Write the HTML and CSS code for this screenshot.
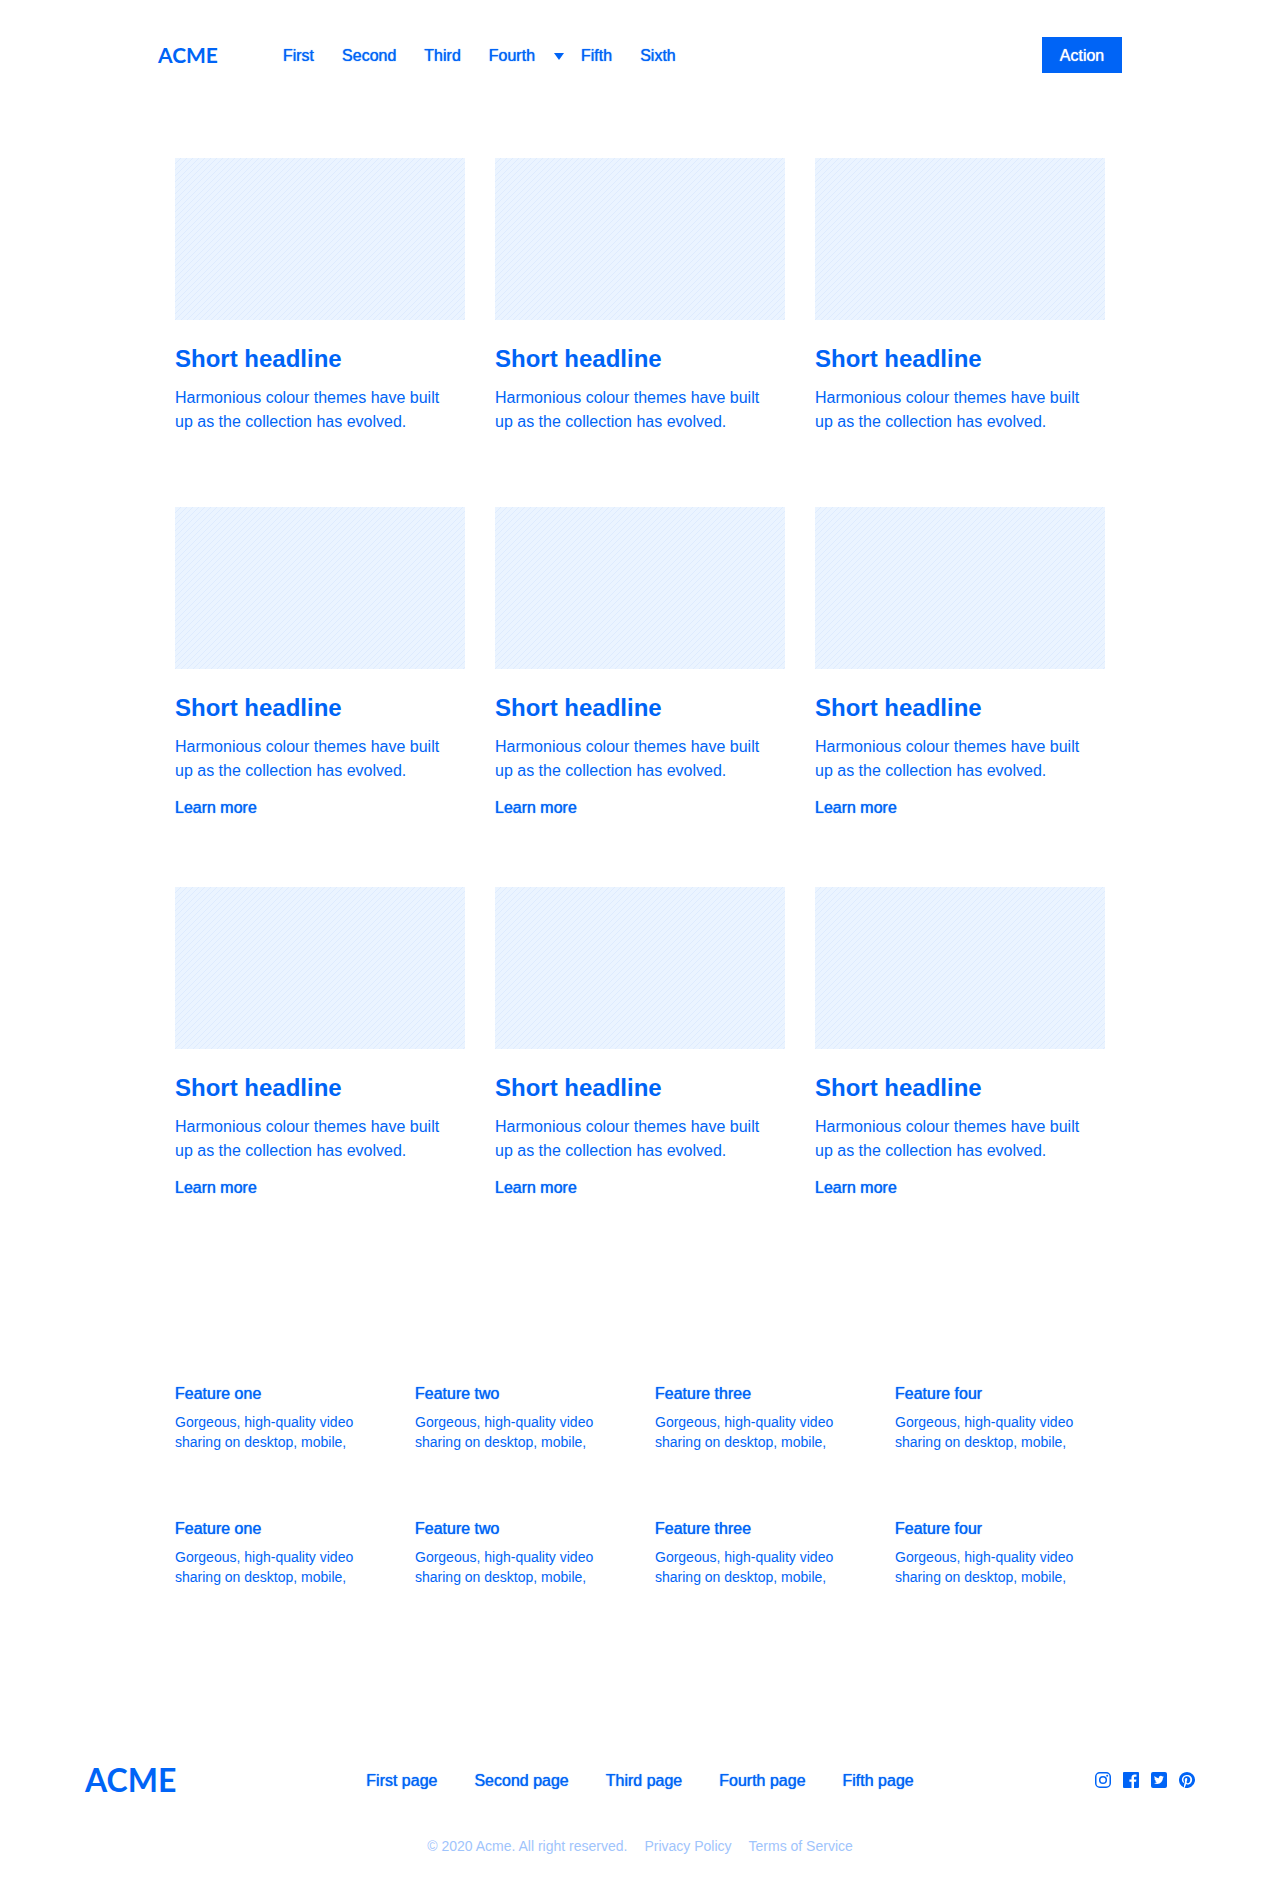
FILE: index.html
```html
<!DOCTYPE html>
<html lang="en">
<head>
<meta charset="utf-8">
<meta name="viewport" content="width=device-width, initial-scale=1">
<title>Acme</title>
<link rel="stylesheet" href="styles.css">
</head>
<body>
<header class="header">
  <a class="logo" href="#">ACME</a>
  <nav class="header-nav" aria-label="Main">
    <a href="#">First</a>
    <a href="#">Second</a>
    <a href="#">Third</a>
    <a class="has-menu" href="#">Fourth <svg class="caret" viewBox="0 0 10 7" aria-hidden="true"><path d="M0 0h10L5 7z"/></svg></a>
    <a href="#">Fifth</a>
    <a href="#">Sixth</a>
  </nav>
  <button class="action" type="button">Action</button>
</header>

<main class="main">
  <section class="cards cards-plain">
    <article class="card"><div class="thumb"></div><h2>Short headline</h2><p>Harmonious colour themes have built up as the collection has evolved.</p></article>
    <article class="card"><div class="thumb"></div><h2>Short headline</h2><p>Harmonious colour themes have built up as the collection has evolved.</p></article>
    <article class="card"><div class="thumb"></div><h2>Short headline</h2><p>Harmonious colour themes have built up as the collection has evolved.</p></article>
  </section>
  <section class="cards">
    <article class="card"><div class="thumb"></div><h2>Short headline</h2><p>Harmonious colour themes have built up as the collection has evolved.</p><a class="more" href="#">Learn more</a></article>
    <article class="card"><div class="thumb"></div><h2>Short headline</h2><p>Harmonious colour themes have built up as the collection has evolved.</p><a class="more" href="#">Learn more</a></article>
    <article class="card"><div class="thumb"></div><h2>Short headline</h2><p>Harmonious colour themes have built up as the collection has evolved.</p><a class="more" href="#">Learn more</a></article>
  </section>
  <section class="cards">
    <article class="card"><div class="thumb"></div><h2>Short headline</h2><p>Harmonious colour themes have built up as the collection has evolved.</p><a class="more" href="#">Learn more</a></article>
    <article class="card"><div class="thumb"></div><h2>Short headline</h2><p>Harmonious colour themes have built up as the collection has evolved.</p><a class="more" href="#">Learn more</a></article>
    <article class="card"><div class="thumb"></div><h2>Short headline</h2><p>Harmonious colour themes have built up as the collection has evolved.</p><a class="more" href="#">Learn more</a></article>
  </section>
  <section class="features">
    <article class="feature"><h3>Feature one</h3><p>Gorgeous, high-quality video sharing on desktop, mobile,</p></article>
    <article class="feature"><h3>Feature two</h3><p>Gorgeous, high-quality video sharing on desktop, mobile,</p></article>
    <article class="feature"><h3>Feature three</h3><p>Gorgeous, high-quality video sharing on desktop, mobile,</p></article>
    <article class="feature"><h3>Feature four</h3><p>Gorgeous, high-quality video sharing on desktop, mobile,</p></article>
    <article class="feature"><h3>Feature one</h3><p>Gorgeous, high-quality video sharing on desktop, mobile,</p></article>
    <article class="feature"><h3>Feature two</h3><p>Gorgeous, high-quality video sharing on desktop, mobile,</p></article>
    <article class="feature"><h3>Feature three</h3><p>Gorgeous, high-quality video sharing on desktop, mobile,</p></article>
    <article class="feature"><h3>Feature four</h3><p>Gorgeous, high-quality video sharing on desktop, mobile,</p></article>
  </section>
</main>

<footer class="footer">
  <div class="footer-top">
    <a class="logo logo-large" href="#">ACME</a>
    <nav class="footer-nav" aria-label="Footer">
      <a href="#">First page</a>
      <a href="#">Second page</a>
      <a href="#">Third page</a>
      <a href="#">Fourth page</a>
      <a href="#">Fifth page</a>
    </nav>
    <div class="social">
      <a href="#" aria-label="Instagram"><svg viewBox="0 0 16 16"><rect x=".75" y=".75" width="14.5" height="14.5" rx="4" fill="none" stroke="currentColor" stroke-width="1.5"/><circle cx="8" cy="8" r="3.3" fill="none" stroke="currentColor" stroke-width="1.5"/><circle cx="12.2" cy="3.8" r="1"/></svg></a>
      <a href="#" aria-label="Facebook"><svg viewBox="0 0 16 16"><path d="M.9 0A.9.9 0 0 0 0 .9v14.2c0 .5.4.9.9.9h7.6V9.8H6.4V7.4h2.1V5.6c0-2.1 1.3-3.2 3.1-3.2.9 0 1.700.1 1.900.1v2.200h-1.300c-1 0-1.200.5-1.200 1.200v1.500h2.400l-.3 2.400H11V16h4.100c.5 0 .9-.4.9-.9V.9a.9.9 0 0 0-.9-.9z"/></svg></a>
      <a href="#" aria-label="Twitter"><svg viewBox="0 0 16 16"><path fill-rule="evenodd" d="M2 0h12a2 2 0 0 1 2 2v12a2 2 0 0 1-2 2H2a2 2 0 0 1-2-2V2a2 2 0 0 1 2-2zm11 4.700c-.4.200-.8.300-1.200.300.400-.3.800-.7.900-1.100-.4.200-.9.400-1.300.500a2.050 2.050 0 0 0-3.500 1.900c-1.700-.1-3.200-.9-4.200-2.200-.6 1-.2 2.200.6 2.800-.3 0-.7-.1-.9-.3 0 1 .7 1.900 1.600 2.100-.3.100-.6.100-.9 0 .3.800 1 1.400 1.900 1.400A4.100 4.100 0 0 1 3 11c.9.600 2 .9 3.100.9 3.800 0 5.900-3.200 5.800-6.100.4-.3.800-.7 1.100-1.100z"/></svg></a>
      <a href="#" aria-label="Pinterest"><svg viewBox="0 0 16 16"><path d="M8 0a8 8 0 0 0-2.915 15.452c-.07-.633-.134-1.606.027-2.297.146-.625.938-3.977.938-3.977s-.239-.479-.239-1.187c0-1.113.645-1.943 1.448-1.943.682 0 1.012.512 1.012 1.127 0 .686-.437 1.712-.663 2.663-.188.796.4 1.446 1.185 1.446 1.422 0 2.515-1.500 2.515-3.664 0-1.915-1.377-3.254-3.342-3.254-2.276 0-3.612 1.707-3.612 3.471 0 .688.265 1.425.595 1.826a.24.24 0 0 1 .056.230c-.061.252-.196.796-.222.907-.035.146-.116.177-.268.107-1-.465-1.624-1.926-1.624-3.100 0-2.523 1.834-4.840 5.286-4.840 2.775 0 4.932 1.977 4.932 4.620 0 2.757-1.739 4.976-4.151 4.976-.811 0-1.573-.421-1.834-.919l-.498 1.902c-.181.695-.669 1.566-.995 2.097A8 8 0 1 0 8 0z"/></svg></a>
    </div>
  </div>
  <div class="legal">
    <span>© 2020 Acme. All right reserved.</span>
    <a href="#">Privacy Policy</a>
    <a href="#">Terms of Service</a>
  </div>
</footer>
</body>
</html>
```
FILE: styles.css
```css
:root {
  --blue: #0064f6;
  --pale: #9fc4fc;
}

* { box-sizing: border-box; }

body {
  margin: 0;
  background: #fff;
  color: var(--blue);
  font: 16px/24px "Liberation Sans", Arial, sans-serif;
}

h2, h3, p { margin: 0; }

a { color: inherit; text-decoration: none; }

svg { display: block; fill: currentColor; }

.header {
  display: flex;
  align-items: center;
  max-width: 1012px;
  margin: 0 auto;
  padding: 37px 24px 0;
}

.logo {
  font: 700 21px/36px Lato, sans-serif;
}

.logo-large {
  font-size: 32px;
}

.header-nav {
  display: flex;
  gap: 28px;
  margin-left: 65px;
  padding-top: 2px;
}

/* Medium weight: regular letterforms, slightly thickened */
.header-nav, .footer-nav, .more, .feature h3, .action {
  text-shadow: 0 0 1px currentColor;
}

.has-menu {
  display: flex;
  align-items: center;
  gap: 19px;
  margin-right: -11px;
}

.caret { width: 10px; height: 7px; }

.action {
  min-width: 80px;
  height: 36px;
  margin-left: auto;
  padding: 2px 16px 0;
  border: 0;
  background: var(--blue);
  color: #fff;
  font: inherit;
}

.main {
  max-width: 978px;
  margin: 0 auto;
  padding: 85px 24px 0;
}

.cards {
  display: grid;
  grid-template-columns: repeat(3, 1fr);
  gap: 30px;
  margin-bottom: 67px;
}

.cards-plain { margin-bottom: 73px; }

.thumb {
  height: 162px;
  margin-bottom: 23px;
  background: linear-gradient(135deg, #ebf4ff 42%, #deebfe 42% 58%, #ebf4ff 58%) 0 0 / 6px 6px;
}

.card h2 {
  margin-bottom: 11px;
  font-size: 24px;
  line-height: 32px;
}

.card p { max-width: 276px; }

.more {
  display: inline-block;
  margin-top: 13px;
}

.features {
  display: grid;
  grid-template-columns: repeat(4, 1fr);
  gap: 65px 30px;
  padding-top: 115px;
}

.feature h3 {
  margin-bottom: 6px;
  font-size: 16px;
  font-weight: 400;
}

.feature p {
  font-size: 14px;
  line-height: 20px;
}

.footer {
  max-width: 1158px;
  margin: 0 auto;
  padding: 175px 24px 32px;
}

.footer-top {
  display: grid;
  grid-template-columns: 1fr auto 1fr;
  align-items: center;
}

.footer-nav {
  display: flex;
  gap: 37px;
  padding-top: 2px;
}

.social {
  display: flex;
  justify-content: flex-end;
  gap: 12px;
}

.social svg { width: 16px; height: 16px; }

.legal {
  display: flex;
  justify-content: center;
  gap: 17px;
  margin-top: 38px;
  color: var(--pale);
  font-size: 14px;
  line-height: 20px;
}
```
